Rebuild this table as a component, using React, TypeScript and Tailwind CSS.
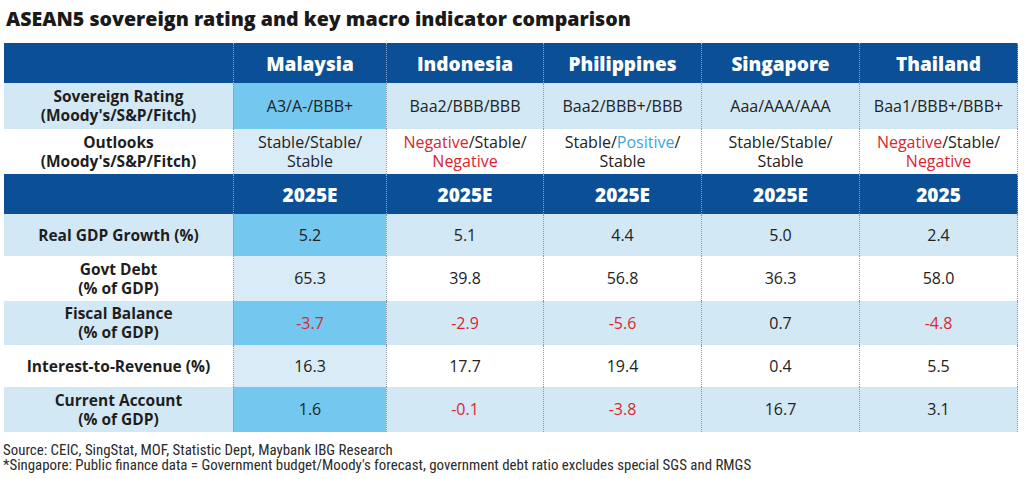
import React from 'react'

type Cell = React.ReactNode

const RED = 'text-[#d9262e]'

const cols = 'grid grid-cols-[229px_153px_157px_158px_158px_159px]'

function Neg({ children }: { children: React.ReactNode }) {
  return <span className={RED}>{children}</span>
}

function HeaderRow({ cells }: { cells: string[] }) {
  return (
    <div className={`${cols} h-[40px] bg-[#0b5096] text-white`}>
      <div />
      {cells.map((c, i) => (
        <div
          key={i}
          className={`flex items-center justify-center border-l border-dotted border-[#7fa6d0] text-[19px] font-extrabold pt-[2px] ${i === cells.length - 1 ? 'border-r' : ''}`}
        >
          {c}
        </div>
      ))}
    </div>
  )
}

function DataRow({
  label,
  cells,
  shaded,
  height,
}: {
  label: React.ReactNode
  cells: Cell[]
  shaded: boolean
  height: string
}) {
  return (
    <div className={`${cols} ${height} ${shaded ? 'bg-[#d3e8f5]' : 'bg-white'}`}>
      <div className="flex items-center justify-center text-center text-[15.5px] font-bold leading-[19px] text-[#1e1e1e]">
        {label}
      </div>
      {cells.map((c, i) => (
        <div
          key={i}
          className={`flex items-center justify-center text-center text-[16px] leading-[19px] text-[#222] border-l border-dotted border-[#8e99a6] ${
            i === 0 ? (shaded ? 'bg-[#74c8ef]' : 'bg-[#d8ebf7]') : ''
          } ${i === cells.length - 1 ? 'border-r' : ''}`}
        >
          {c}
        </div>
      ))}
    </div>
  )
}

export default function App() {
  return (
    <div className="w-[1024px] h-[479px] bg-white font-['Open_Sans','Noto_Sans',sans-serif] overflow-hidden">
      <h1 className="pl-[6px] pt-[4px] h-[43px] text-[19.6px] font-extrabold leading-[30px] text-[#1a1a1a]">
        ASEAN5 sovereign rating and key macro indicator comparison
      </h1>

      <div className="ml-[4px] w-[1014px]">
        <HeaderRow cells={['Malaysia', 'Indonesia', 'Philippines', 'Singapore', 'Thailand']} />
        <DataRow
          shaded
          height="h-[46px]"
          label={
            <span>
              Sovereign Rating
              <br />
              (Moody's/S&amp;P/Fitch)
            </span>
          }
          cells={['A3/A-/BBB+', 'Baa2/BBB/BBB', 'Baa2/BBB+/BBB', 'Aaa/AAA/AAA', 'Baa1/BBB+/BBB+']}
        />
        <DataRow
          shaded={false}
          height="h-[45px]"
          label={
            <span>
              Outlooks
              <br />
              (Moody's/S&amp;P/Fitch)
            </span>
          }
          cells={[
            <span>
              Stable/Stable/
              <br />
              Stable
            </span>,
            <span>
              <Neg>Negative</Neg>/Stable/
              <br />
              <Neg>Negative</Neg>
            </span>,
            <span>
              Stable/<span className="text-[#3aa7d9]">Positive</span>/
              <br />
              Stable
            </span>,
            <span>
              Stable/Stable/
              <br />
              Stable
            </span>,
            <span>
              <Neg>Negative</Neg>/Stable/
              <br />
              <Neg>Negative</Neg>
            </span>,
          ]}
        />
        <HeaderRow cells={['2025E', '2025E', '2025E', '2025E', '2025']} />
        <DataRow
          shaded
          height="h-[42px]"
          label="Real GDP Growth (%)"
          cells={['5.2', '5.1', '4.4', '5.0', '2.4']}
        />
        <DataRow
          shaded={false}
          height="h-[45px]"
          label={
            <span>
              Govt Debt
              <br />
              (% of GDP)
            </span>
          }
          cells={['65.3', '39.8', '56.8', '36.3', '58.0']}
        />
        <DataRow
          shaded
          height="h-[44px]"
          label={
            <span>
              Fiscal Balance
              <br />
              (% of GDP)
            </span>
          }
          cells={[<Neg>-3.7</Neg>, <Neg>-2.9</Neg>, <Neg>-5.6</Neg>, '0.7', <Neg>-4.8</Neg>]}
        />
        <DataRow
          shaded={false}
          height="h-[42px]"
          label="Interest-to-Revenue (%)"
          cells={['16.3', '17.7', '19.4', '0.4', '5.5']}
        />
        <DataRow
          shaded
          height="h-[45px]"
          label={
            <span>
              Current Account
              <br />
              (% of GDP)
            </span>
          }
          cells={['1.6', <Neg>-0.1</Neg>, <Neg>-3.8</Neg>, '16.7', '3.1']}
        />
      </div>

      <div className="pl-[3px] pt-[11px] text-[14.9px] leading-[15px] text-[#2a2a2a] font-['Liberation_Sans_Narrow','Roboto_Condensed','Liberation_Sans',sans-serif]">
        <div>Source: CEIC, SingStat, MOF, Statistic Dept, Maybank IBG Research</div>
        <div>
          *Singapore: Public finance data = Government budget/Moody's forecast, government debt ratio excludes special SGS and RMGS
        </div>
      </div>
    </div>
  )
}
